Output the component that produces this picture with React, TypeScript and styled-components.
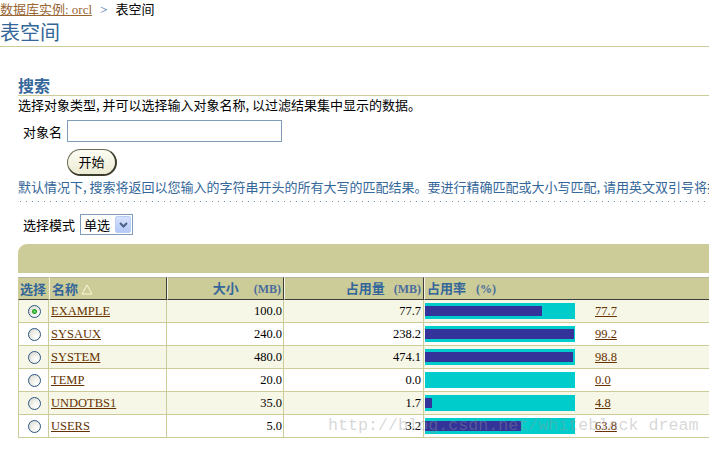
import React from 'react';
import styled, { createGlobalStyle } from 'styled-components';

const cjk = `"Noto Sans CJK SC", "Liberation Sans", sans-serif`;
const serif = `"Liberation Serif", "Noto Sans CJK SC", serif`;

const GlobalStyle = createGlobalStyle`
  html, body {
    margin: 0;
    padding: 0;
    background: #ffffff;
    overflow: hidden;
  }
  body {
    font-family: ${cjk};
  }
`;

interface Tablespace {
  name: string;
  size: string;
  used: string;
  pct: number;
}

const rows: Tablespace[] = [
  { name: 'EXAMPLE', size: '100.0', used: '77.7', pct: 77.7 },
  { name: 'SYSAUX', size: '240.0', used: '238.2', pct: 99.2 },
  { name: 'SYSTEM', size: '480.0', used: '474.1', pct: 98.8 },
  { name: 'TEMP', size: '20.0', used: '0.0', pct: 0.0 },
  { name: 'UNDOTBS1', size: '35.0', used: '1.7', pct: 4.8 },
  { name: 'USERS', size: '5.0', used: '3.2', pct: 63.8 },
];

const Page = styled.div`
  position: relative;
  width: 780px;
  height: 449px;
  overflow: hidden;
`;

const Crumbs = styled.nav`
  font-family: ${cjk};
  font-size: 13px;
  line-height: 17px;
  height: 17px;
  white-space: nowrap;
  color: #000;
`;

const CrumbLink = styled.a`
  font-family: ${serif};
  color: #996633;
  text-decoration: underline;
`;

const CrumbSep = styled.span`
  font-family: ${serif};
  color: #336699;
  margin: 0 8px;
`;

const PageTitle = styled.h1`
  margin: 0;
  font-family: ${cjk};
  font-weight: normal;
  font-size: 20px;
  line-height: 30px;
  height: 29px;
  color: #336699;
  border-bottom: 1px solid #cccc99;
  white-space: nowrap;
`;

const Content = styled.div`
  padding-left: 18px;
`;

const SectionTitle = styled.h2`
  margin: 28px 0 0;
  font-family: ${cjk};
  font-size: 16px;
  font-weight: bold;
  line-height: 20px;
  height: 20px;
  color: #336699;
  border-bottom: 1px solid #cccc99;
`;

const Instruction = styled.p`
  margin: 0;
  font-size: 13px;
  line-height: 17px;
  color: #000;
  white-space: nowrap;
`;

const FieldRow = styled.div<{ $top: number }>`
  display: flex;
  align-items: center;
  gap: 5px;
  margin-top: ${p => p.$top}px;
  padding-left: 5px;
`;

const FieldLabel = styled.label`
  font-size: 13px;
  line-height: 17px;
  color: #000;
  white-space: nowrap;
`;

const TextInput = styled.input`
  box-sizing: border-box;
  width: 215px;
  height: 22px;
  margin: 0;
  border: 1px solid #7f9db9;
  background: #fff;
  padding: 0 3px;
`;

const ButtonRow = styled.div`
  margin-top: 6px;
  padding-left: 49px;
`;

const GoButton = styled.button`
  box-sizing: border-box;
  width: 50px;
  height: 27px;
  padding: 0 0 1px;
  border-radius: 14px;
  border: 1px solid #6b6b55;
  border-right-width: 2px;
  border-bottom-width: 2px;
  border-right-color: #3c3c2c;
  border-bottom-color: #3c3c2c;
  background: linear-gradient(#fdfdf4, #ecebd4);
  font-family: ${cjk};
  font-size: 13px;
  color: #000;
`;

const Hint = styled.p`
  margin: 2px 0 0;
  font-size: 13px;
  line-height: 17px;
  color: #336699;
  white-space: nowrap;
`;

const DottedRule = styled.div`
  margin-top: 6px;
  height: 1px;
  background-image: linear-gradient(90deg, #6f8fb5 1px, transparent 1px);
  background-size: 6px 1px;
  background-position: 2px 0;
`;

const SelectBox = styled.div`
  box-sizing: border-box;
  width: 53px;
  height: 21px;
  border: 1px solid #7f9db9;
  display: flex;
  align-items: center;
  justify-content: space-between;
  padding: 1px 1px 1px 3px;
  background: #fff;
  font-size: 13px;
  color: #000;
`;

const SelectButton = styled.span`
  box-sizing: border-box;
  width: 16px;
  height: 17px;
  border: 1px solid #b9cdf6;
  border-radius: 2px;
  background: linear-gradient(#d6e2fd, #b5c9f7);
  display: flex;
  align-items: center;
  justify-content: center;
`;

const TableBar = styled.div`
  margin-top: 9px;
  height: 29px;
  background: #cccc99;
  border-top-left-radius: 9px;
`;

const Grid = styled.table`
  margin-top: 4px;
  border-collapse: separate;
  border-spacing: 0;
  table-layout: fixed;
  width: 742px;
`;

const HeadCell = styled.th<{ $align?: string; $plain?: boolean }>`
  box-sizing: border-box;
  height: 23px;
  padding: 0 2px;
  background: #cccc99;
  color: #336699;
  font-family: ${cjk};
  font-size: 13px;
  font-weight: bold;
  line-height: 17px;
  text-align: ${p => p.$align || 'left'};
  white-space: nowrap;
  border-top: 1px solid #b4b4a0;
  border-bottom: 1px solid #3d3d3d;
  border-left: 1px solid ${p => (p.$plain ? '#cccc99' : '#f4f4e4')};
  border-right: 1px solid ${p => (p.$plain ? '#cccc99' : '#3d3d3d')};
`;

const Unit = styled.span<{ $gap: number }>`
  font-family: ${serif};
  font-weight: bold;
  font-size: 12px;
  color: #4a6c9c;
  margin-left: ${p => p.$gap}px;
`;

const Row = styled.tr<{ $shaded: boolean }>`
  background: ${p => (p.$shaded ? '#f7f7e7' : '#ffffff')};
`;

const Cell = styled.td<{ $align?: string; $first?: boolean }>`
  box-sizing: border-box;
  height: 23px;
  padding: 0 1px 0 2px;
  font-family: ${serif};
  font-size: 12.5px;
  line-height: 15px;
  color: #000;
  text-align: ${p => p.$align || 'left'};
  white-space: nowrap;
  border-right: 1px solid #cccc99;
  border-bottom: 1px solid #cccc99;
  border-left: ${p => (p.$first ? '1px solid #cccc99' : 'none')};
`;

const Radio = styled.span<{ $checked?: boolean }>`
  display: inline-block;
  box-sizing: border-box;
  width: 13px;
  height: 13px;
  border: 1px solid #2a5682;
  border-radius: 50%;
  vertical-align: middle;
  background: ${p =>
    p.$checked
      ? 'radial-gradient(circle at 50% 50%, #7fe07f 0, #21a121 2px, rgba(0,0,0,0) 3px), radial-gradient(circle at 70% 70%, #ffffff 0, #f0f0ea 45%, #d0d0c6 100%)'
      : 'radial-gradient(circle at 70% 70%, #ffffff 0, #f0f0ea 45%, #d0d0c6 100%)'};
`;

const NameLink = styled.a`
  color: #663300;
  text-decoration: underline;
`;

const UsageCell = styled.div`
  display: flex;
  align-items: center;
`;

const UsageTrack = styled.span`
  box-sizing: border-box;
  display: block;
  width: 150px;
  height: 16px;
  padding: 3px 0;
  background: #00cccc;
`;

const UsageFill = styled.span`
  display: block;
  height: 10px;
  background: #333399;
`;

const PctLink = styled.a`
  margin-left: 20px;
  color: #663300;
  text-decoration: underline;
`;

const Watermark = styled.div`
  position: absolute;
  left: 328px;
  top: 416px;
  font-family: "Liberation Mono", monospace;
  font-size: 16.7px;
  line-height: 20px;
  color: rgba(150, 150, 150, 0.38);
  white-space: nowrap;
  pointer-events: none;
`;

function SortMark() {
  return (
    <svg width="12" height="11" viewBox="0 0 12 11" style={{ marginLeft: 3, verticalAlign: -1 }}>
      <path d="M6 1 L11 10 L1 10 Z" fill="none" stroke="#fbf8d8" strokeWidth="1" />
    </svg>
  );
}

function Chevron() {
  return (
    <svg width="9" height="6" viewBox="0 0 9 6">
      <path d="M1 1 L4.5 4.5 L8 1" fill="none" stroke="#4d6185" strokeWidth="2" />
    </svg>
  );
}

export default function App() {
  return (
    <Page>
      <GlobalStyle />
      <Crumbs>
        <CrumbLink href="#">数据库实例: orcl</CrumbLink>
        <CrumbSep>&gt;</CrumbSep>
        表空间
      </Crumbs>
      <PageTitle>表空间</PageTitle>
      <Content>
        <SectionTitle>搜索</SectionTitle>
        <Instruction>选择对象类型, 并可以选择输入对象名称, 以过滤结果集中显示的数据。</Instruction>
        <FieldRow $top={7}>
          <FieldLabel>对象名</FieldLabel>
          <TextInput type="text" />
        </FieldRow>
        <ButtonRow>
          <GoButton>开始</GoButton>
        </ButtonRow>
        <Hint>
          默认情况下, 搜索将返回以您输入的字符串开头的所有大写的匹配结果。要进行精确匹配或大小写匹配, 请用英文双引号将搜索字符串括起来。
        </Hint>
        <DottedRule />
        <FieldRow $top={12}>
          <FieldLabel>选择模式</FieldLabel>
          <SelectBox>
            单选
            <SelectButton>
              <Chevron />
            </SelectButton>
          </SelectBox>
        </FieldRow>
        <TableBar />
        <Grid>
          <colgroup>
            <col style={{ width: 31 }} />
            <col style={{ width: 118 }} />
            <col style={{ width: 117 }} />
            <col style={{ width: 140 }} />
            <col />
          </colgroup>
          <thead>
            <tr>
              <HeadCell $plain style={{ paddingLeft: 1 }}>选择</HeadCell>
              <HeadCell>
                名称
                <SortMark />
              </HeadCell>
              <HeadCell $align="right">
                大小<Unit $gap={15}>(MB)</Unit>
              </HeadCell>
              <HeadCell $align="right">
                占用量<Unit $gap={9}>(MB)</Unit>
              </HeadCell>
              <HeadCell>
                占用率<Unit $gap={10}>(%)</Unit>
              </HeadCell>
            </tr>
          </thead>
          <tbody>
            {rows.map((r, i) => (
              <Row key={r.name} $shaded={i % 2 === 0}>
                <Cell $first $align="center">
                  <Radio $checked={i === 0} />
                </Cell>
                <Cell>
                  <NameLink href="#">{r.name}</NameLink>
                </Cell>
                <Cell $align="right">{r.size}</Cell>
                <Cell $align="right" style={{ paddingRight: 2 }}>{r.used}</Cell>
                <Cell style={{ paddingLeft: 1 }}>
                  <UsageCell>
                    <UsageTrack>
                      <UsageFill style={{ width: `${r.pct}%` }} />
                    </UsageTrack>
                    <PctLink href="#">{r.pct.toFixed(1)}</PctLink>
                  </UsageCell>
                </Cell>
              </Row>
            ))}
          </tbody>
        </Grid>
      </Content>
      <Watermark>http://blog.csdn.net/whiteblack dream</Watermark>
    </Page>
  );
}
